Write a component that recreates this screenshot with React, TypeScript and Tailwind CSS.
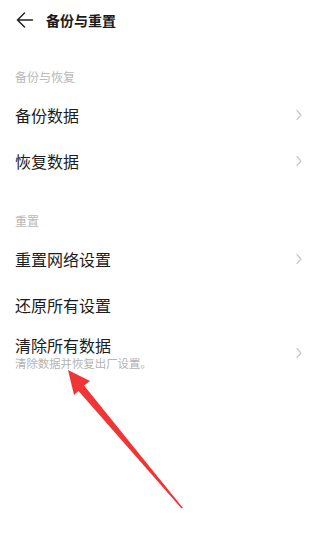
const font = { fontFamily: '"Noto Sans CJK SC", "Noto Sans", sans-serif' };

function Chevron() {
  return (
    <svg width="8" height="12" viewBox="0 0 8 12" className="shrink-0">
      <path d="M2 1.5 L6 6 L2 10.5" fill="none" stroke="#c8c8c8" strokeWidth="1.2" strokeLinecap="round" strokeLinejoin="round" />
    </svg>
  );
}

function Row({ title, sub, arrow = true }: { title: string; sub?: string; arrow?: boolean }) {
  if (sub) {
    return (
      <div className="flex items-center justify-between pl-[15px] pr-[16px] pt-[5px] pb-[8px]">
        <div className="flex flex-col">
          <span className="text-[16px] leading-[22px] text-[#1c1c1c]">{title}</span>
          <span className="text-[11.4px] leading-[15px] text-[#b3b3b3]">{sub}</span>
        </div>
        <Chevron />
      </div>
    );
  }
  return (
    <div className="flex h-[46px] items-center justify-between pl-[15px] pr-[16px]">
      <span className="text-[16px] text-[#1c1c1c]">{title}</span>
      {arrow && <Chevron />}
    </div>
  );
}

function Label({ text, top, bottom }: { text: string; top: string; bottom: string }) {
  return (
    <div className={`pl-[15px] ${top} ${bottom}`}>
      <span className="block text-[12px] leading-[20px] text-[#b8b8b8]">{text}</span>
    </div>
  );
}

export default function App() {
  return (
    <div className="relative h-[553px] w-[319px] overflow-hidden bg-white" style={font}>
      <header className="flex h-[40px] items-center gap-[12px] pl-[16px]">
        <svg width="18" height="16" viewBox="0 0 18 16">
          <path d="M1.5 8 H16.5 M8.5 1 L1.5 8 L8.5 15" fill="none" stroke="#222" strokeWidth="1.5" strokeLinecap="round" strokeLinejoin="round" />
        </svg>
        <span className="text-[14px] font-bold text-[#1a1a1a]">备份与重置</span>
      </header>

      <Label text="备份与恢复" top="pt-[27px]" bottom="pb-[5px]" />
      <Row title="备份数据" />
      <Row title="恢复数据" />

      <Label text="重置" top="pt-[27px]" bottom="pb-[5px]" />
      <Row title="重置网络设置" />
      <div className="h-[47px]">
        <Row title="还原所有设置" arrow={false} />
      </div>
      <Row title="清除所有数据" sub="清除数据并恢复出厂设置。" />

      <svg className="pointer-events-none absolute left-0 top-0" width="319" height="553" viewBox="0 0 319 553">
        <polygon
          points="68,370 90,381 84,385.5 183,508 181.5,508.5 78.5,391 74,395"
          fill="#ef3535"
        />
      </svg>
    </div>
  );
}
